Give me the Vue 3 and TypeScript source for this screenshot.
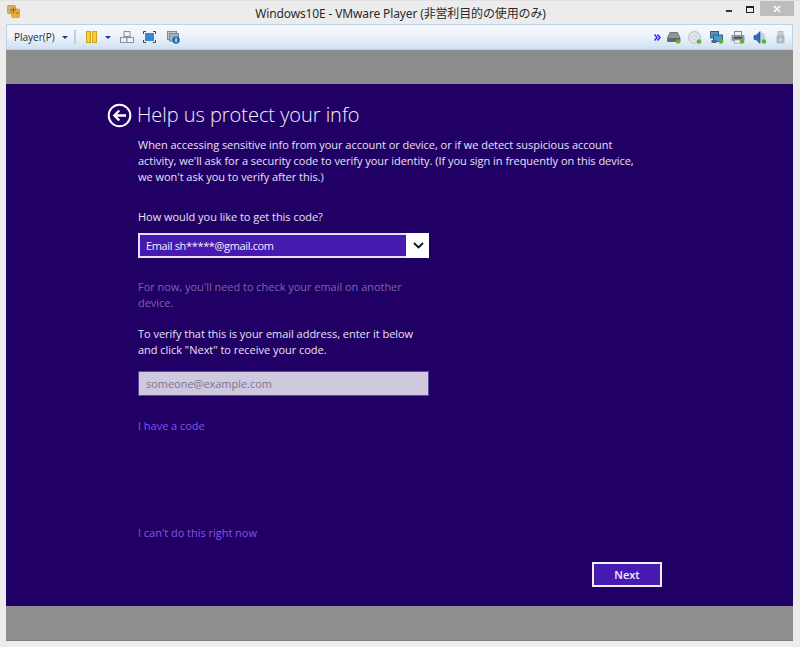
<script setup lang="ts">
const title = 'Windows10E - VMware Player (非営利目的の使用のみ)';
</script>

<template>
  <div class="window">
    <header class="titlebar">
      <svg class="app-icon" width="13" height="13" viewBox="0 0 13 13">
        <rect x=".5" y=".5" width="8" height="8" rx="1" fill="#d2b25c" stroke="#a8853a" stroke-width=".6" />
        <rect x="4.500" y="4" width="8" height="8.500" rx="1" fill="#efae33" stroke="#c98a1e" stroke-width=".6" />
        <path d="M3 5h6M6.500 2.500v6M9 8h3" stroke="#8b6a2a" stroke-width="1" />
      </svg>
      <div class="title">{{ title }}</div>
      <div class="controls">
        <span class="min"></span>
        <span class="max"></span>
        <span class="close">
          <svg width="8" height="8" viewBox="0 0 8 8"><path d="M1 1l6 6M7 1l-6 6" stroke="#fff" stroke-width="1.500" /></svg>
        </span>
      </div>
    </header>

    <nav class="toolbar">
      <span class="menu">Player(P)</span>
      <span class="caret first"></span>
      <span class="sep"></span>
      <svg class="pause" width="11" height="12" viewBox="0 0 11 12">
        <rect x=".5" y=".5" width="4" height="11" fill="#f7cf3c" stroke="#d0a31a" />
        <rect x="6.500" y=".5" width="4" height="11" fill="#f7cf3c" stroke="#d0a31a" />
      </svg>
      <span class="caret second"></span>
      <svg class="tool t-send" width="14" height="12" viewBox="0 0 14 12">
        <g fill="#eef0f2" stroke="#8b929b">
          <rect x="4" y=".5" width="6" height="5" />
          <rect x=".5" y="6.500" width="6.500" height="5" />
          <rect x="7" y="6.500" width="6.500" height="5" />
        </g>
      </svg>
      <svg class="tool t-full" width="13" height="12" viewBox="0 0 13 12">
        <rect x="2" y="2" width="9" height="8" fill="#3f84d2" />
        <path d="M.5 3v-2.500h2.500M10 .5h2.500v2.500M12.500 9v2.500h-2.500M3 11.500h-2.500v-2.500" fill="none" stroke="#36424f" stroke-width="1" />
      </svg>
      <svg class="tool t-unity" width="13" height="13" viewBox="0 0 13 13">
        <rect x=".5" y=".5" width="9" height="8" fill="#c3c8ce" stroke="#7f8790" />
        <rect x="2.500" y="2.500" width="9" height="7.500" fill="#aab1b9" stroke="#7f8790" />
        <circle cx="9" cy="9" r="3.800" fill="#1f6fb8" />
        <rect x="8.400" y="8" width="1.300" height="3" fill="#fff" />
        <rect x="8.400" y="6.400" width="1.300" height="1.100" fill="#fff" />
      </svg>

      <span class="spacer"></span>

      <svg class="chev" width="7" height="7" viewBox="0 0 7 7">
        <path d="M.5.500L3 3.500.5 6.500M3.500.500L6 3.500 3.500 6.500" fill="none" stroke="#2a2cf0" stroke-width="1.500" />
      </svg>

      <svg class="device" width="14" height="13" viewBox="0 0 14 13">
        <path d="M3 1.500h7.500L13 7v3.500H.5V7z" fill="#8d959d" stroke="#6e767e" />
        <rect x="1" y="7" width="12" height="3.500" fill="#5e666e" />
        <circle cx="11" cy="10.500" r="2.300" fill="#5cb531" />
      </svg>
      <svg class="device" width="14" height="13" viewBox="0 0 14 13">
        <circle cx="6.500" cy="6.500" r="6" fill="#dfe3e6" stroke="#b8bec4" />
        <circle cx="6.500" cy="6.500" r="1.500" fill="#fff" stroke="#a6adb4" stroke-width=".6" />
        <circle cx="11" cy="10.500" r="2.300" fill="#5cb531" />
      </svg>
      <svg class="device" width="14" height="13" viewBox="0 0 14 13">
        <rect x=".5" y=".5" width="8" height="6.500" fill="#5f93bf" stroke="#3d5d7a" />
        <rect x="3.500" y="4" width="9" height="6.500" fill="#39a0d8" stroke="#3d5d7a" />
        <rect x="1.500" y="9" width="5" height="3" fill="#5a6570" />
        <circle cx="11" cy="10.500" r="2.300" fill="#5cb531" />
      </svg>
      <svg class="device" width="14" height="13" viewBox="0 0 14 13">
        <rect x="3.500" y=".5" width="7" height="4" fill="#f2f3f4" stroke="#868d94" />
        <rect x=".5" y="4" width="13" height="6" rx="1" fill="#8d959d" />
        <rect x="3" y="6" width="8" height="1.500" fill="#3e454c" />
        <rect x="3.500" y="9" width="7" height="3" fill="#f2f3f4" stroke="#868d94" stroke-width=".6" />
        <circle cx="11" cy="10.500" r="2.300" fill="#5cb531" />
      </svg>
      <svg class="device" width="14" height="13" viewBox="0 0 14 13">
        <ellipse cx="8.500" cy="6.500" rx="4" ry="5" fill="#c4d2e0" />
        <path d="M1 4.500h2L7 .5v12L3 8.500H1z" fill="#2a6eb5" stroke="#1d4f86" stroke-width=".6" />
        <circle cx="11" cy="10.500" r="2.300" fill="#5cb531" />
      </svg>
      <svg class="device usb" width="9" height="13" viewBox="0 0 9 13">
        <rect x="2" y=".5" width="5" height="4" fill="#c6d0da" stroke="#a3afbb" stroke-width=".7" />
        <rect x=".5" y="4.500" width="8" height="8" rx="1" fill="#a9b8c7" />
        <path d="M4.500 6v5M3 8l1.500 2L6 8" fill="none" stroke="#e2e8ee" stroke-width=".8" />
      </svg>
    </nav>

    <div class="viewport">
      <div class="band"></div>
      <main class="screen">
        <div class="content">
          <div class="heading">
            <svg class="back" width="25" height="25" viewBox="0 0 25 25">
              <circle cx="12.500" cy="12.500" r="10.800" fill="none" stroke="#fff" stroke-width="2" />
              <path d="M19 12.500H7.500M12.300 7.500l-5 5 5 5" fill="none" stroke="#fff" stroke-width="2.300" />
            </svg>
            <h1>Help us protect your info</h1>
          </div>
          <div class="body">
            <p class="intro">When accessing sensitive info from your account or device, or if we detect suspicious account<br />activity, we'll ask for a security code to verify your identity. (If you sign in frequently on this device,<br />we won't ask you to verify after this.)</p>
            <label class="ask">How would you like to get this code?</label>
            <div class="select">
              <span class="select-value">Email sh*****@gmail.com</span>
              <span class="select-arrow">
                <svg width="11" height="7" viewBox="0 0 11 7"><path d="M1 1l4.500 4.500L10 1" fill="none" stroke="#111" stroke-width="1.800" /></svg>
              </span>
            </div>
            <p class="dim">For now, you'll need to check your email on another<br />device.</p>
            <p class="verify">To verify that this is your email address, enter it below<br />and click "Next" to receive your code.</p>
            <div class="input">someone@example.com</div>
            <a class="link have">I have a code</a>
            <a class="link cant">I can't do this right now</a>
          </div>
          <div class="actions"><button class="next">Next</button></div>
        </div>
      </main>
      <div class="band bottom"></div>
    </div>
  </div>
</template>

<style>
html, body { margin: 0; padding: 0; background: #ececec; }
</style>

<style scoped>
.window {
  width: 800px;
  height: 647px;
  box-sizing: border-box;
  background: #ececec;
  border-top: 1px solid #e2e2e2;
  padding: 0 7px 0 6px;
  font-family: "Open Sans", "Noto Sans CJK JP", sans-serif;
  overflow: hidden;
}
.titlebar {
  height: 23px;
  position: relative;
  margin: 0 -7px 0 -6px;
  display: flex;
  align-items: center;
  justify-content: center;
}
.app-icon { position: absolute; left: 7px; top: 4px; }
.title {
  font-family: "Noto Sans", "Noto Sans CJK JP", sans-serif;
  font-size: 12px;
  letter-spacing: -.14px;
  color: #2a2a2a;
  line-height: 22px;
  margin-top: 2px;
  padding-left: 1px;
}
.controls {
  position: absolute;
  right: 6px;
  top: 0;
  display: flex;
  align-items: flex-start;
}
.min { width: 6px; height: 2px; background: #333; margin: 9px 14px 0 0; }
.max { width: 6px; height: 4px; border: 1px solid #222; border-top-width: 2px; margin: 5px 6px 0 0; }
.close {
  width: 34px;
  height: 15px;
  background: #bdbdbd;
  display: flex;
  align-items: center;
  justify-content: center;
}
.toolbar {
  height: 26px;
  box-sizing: border-box;
  display: flex;
  align-items: center;
  border: 1px solid #bcd2e8;
  background: linear-gradient(#f6f9fd, #eef4fb 45%, #cfe0f1);
  padding: 0 0 0 7px;
}
.menu { font-size: 10px; color: #1e2b3c; width: 41px; white-space: nowrap; }
.caret { width: 0; height: 0; border: 3px solid transparent; border-top: 3px solid #2b2f9a; border-bottom: 0; }
.caret.first { margin-left: 7px; }
.sep { width: 2px; height: 14px; background: #bcd0e4; margin: 0 10px 0 6px; }
.caret.second { margin-left: 8px; margin-right: 9px; }
.tool { margin-right: 9px; }
.t-full { margin-right: 11px; }
.spacer { flex: 1; }
.chev { margin-right: 6px; }
.device { margin-right: 7.500px; }
.usb { margin-right: 7px; margin-left: 2px; }
.viewport { height: 591px; border-bottom: 1px solid #808080; display: flex; flex-direction: column; box-sizing: border-box; }
.band { height: 34px; background: #8c8c8c; flex: none; }
.band.bottom { background: #8f8f8f; }
.screen { flex: 1; background: #210066; position: relative; box-sizing: border-box; }
.content { height: 100%; display: flex; flex-direction: column; padding-left: 101px; color: #fff; box-sizing: border-box; position: relative; }
.heading { display: flex; align-items: center; height: 30px; margin-top: 16px; }
.back { flex: none; margin-right: 5px; }
h1 { margin: 0; font-weight: 300; font-size: 20px; letter-spacing: -.04px; line-height: 30px; color: #f4f0fa; }
.body { padding-left: 31px; flex: 1; font-size: 11px; line-height: 16px; letter-spacing: -.03px; }
p { margin: 0; }
.intro { margin-top: 7px; color: #e8e2f2; white-space: nowrap; }
.ask { display: block; margin-top: 24px; color: #e8e2f2; }
.select { margin-top: 8px; width: 291px; height: 25px; display: flex; box-sizing: border-box; border: 2px solid #e6e0f2; background: #461ab0; }
.select-value { flex: 1; padding-left: 6px; line-height: 22px; color: #f4effa; letter-spacing: -.35px; }
.select-arrow { width: 22px; background: #fff; display: flex; align-items: center; justify-content: center; margin: -2px -2px -2px 0; padding-left: 1px; }
.dim { margin-top: 21px; color: #7a64a8; }
.verify { margin-top: 15px; color: #e8e2f2; }
.input { margin-top: 13px; width: 291px; height: 25px; box-sizing: border-box; padding-left: 7px; line-height: 24px; background: #cfc9df; color: #7d7690; border: 1px solid #5a45a0; }
.link { display: block; color: #8455e6; }
.have { margin-top: 22px; }
.cant { margin-top: 91px; }
.actions { position: absolute; right: 131px; top: 478px; }
.next { display: block; width: 70px; height: 25px; box-sizing: border-box; background: #461ab0; border: 2px solid #f0ecf8; color: #f4effa; font: 600 11px "Open Sans", sans-serif; padding: 0; }
</style>
